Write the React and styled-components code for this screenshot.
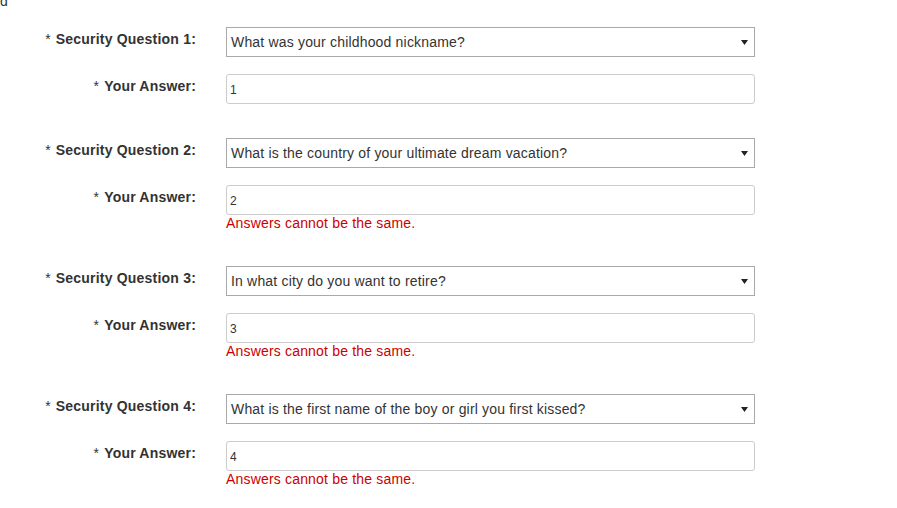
import React from 'react'
import styled, {createGlobalStyle} from 'styled-components'

const GlobalStyle = createGlobalStyle`
  body {
    margin: 0;
    background: #fff;
    font-family: 'Liberation Sans', Arial, sans-serif;
    color: #333;
  }
`

const Page = styled.div`
  display: flex;
  flex-direction: column;
`

const ClippedLine = styled.div`
  height: 6px;
  overflow: hidden;
  display: flex;
  align-items: flex-end;
  font-size: 14px;
  line-height: 14px;
  color: #333;
  margin-bottom: 21px;
`

const ClippedText = styled.span`
  display: block;
  margin-bottom: -2px;
`

const Group = styled.div`
  display: flex;
  flex-direction: column;
  gap: 17px;
  margin-bottom: 34px;
`

const Row = styled.div`
  display: grid;
  grid-template-columns: 196px 529px;
  column-gap: 30px;
  align-items: start;
`

const Label = styled.label`
  text-align: right;
  font-size: 14px;
  line-height: 20px;
  padding-top: 2px;
  font-weight: bold;
  letter-spacing: 0.2px;
  color: #333;
  white-space: nowrap;
`

const Star = styled.span`
  font-weight: normal;
  margin-right: 5px;
`

const Field = styled.div`
  display: flex;
  flex-direction: column;
`

const SelectBox = styled.div`
  box-sizing: border-box;
  height: 30px;
  display: flex;
  align-items: center;
  justify-content: space-between;
  border: 1px solid #a9a9a9;
  padding: 0 6px 0 4px;
  font-size: 14px;
  letter-spacing: 0.18px;
  color: #333;
  background: #fff;
`

const Arrow = styled.svg`
  width: 7px;
  height: 5px;
  margin-top: 1px;
`

const TextInput = styled.input`
  box-sizing: border-box;
  height: 30px;
  width: 100%;
  border: 1px solid #ccc;
  border-radius: 3px;
  padding: 2px 0 0 3px;
  font-family: 'Liberation Sans', Arial, sans-serif;
  font-size: 12px;
  color: #333;
  outline: none;
`

const ErrorText = styled.div`
  font-size: 14px;
  line-height: 17px;
  letter-spacing: 0.18px;
  color: #cc0000;
`

const questions = [
  {q: 'What was your childhood nickname?', a: '1', error: false},
  {q: 'What is the country of your ultimate dream vacation?', a: '2', error: true},
  {q: 'In what city do you want to retire?', a: '3', error: true},
  {q: 'What is the first name of the boy or girl you first kissed?', a: '4', error: true}
]

const App = () => {
  return (
    <Page>
      <GlobalStyle />
      <ClippedLine>
        <ClippedText>d</ClippedText>
      </ClippedLine>
      {questions.map((item, index) => (
        <Group key={index}>
          <Row>
            <Label>
              <Star>*</Star>Security Question {index + 1}:
            </Label>
            <SelectBox>
              <span>{item.q}</span>
              <Arrow viewBox="0 0 7 5">
                <polygon points="0,0 7,0 3.5,5" fill="#222" />
              </Arrow>
            </SelectBox>
          </Row>
          <Row>
            <Label>
              <Star>*</Star>Your Answer:
            </Label>
            <Field>
              <TextInput type="text" defaultValue={item.a} readOnly />
              {item.error && <ErrorText>Answers cannot be the same.</ErrorText>}
            </Field>
          </Row>
        </Group>
      ))}
    </Page>
  )
}

export default App
